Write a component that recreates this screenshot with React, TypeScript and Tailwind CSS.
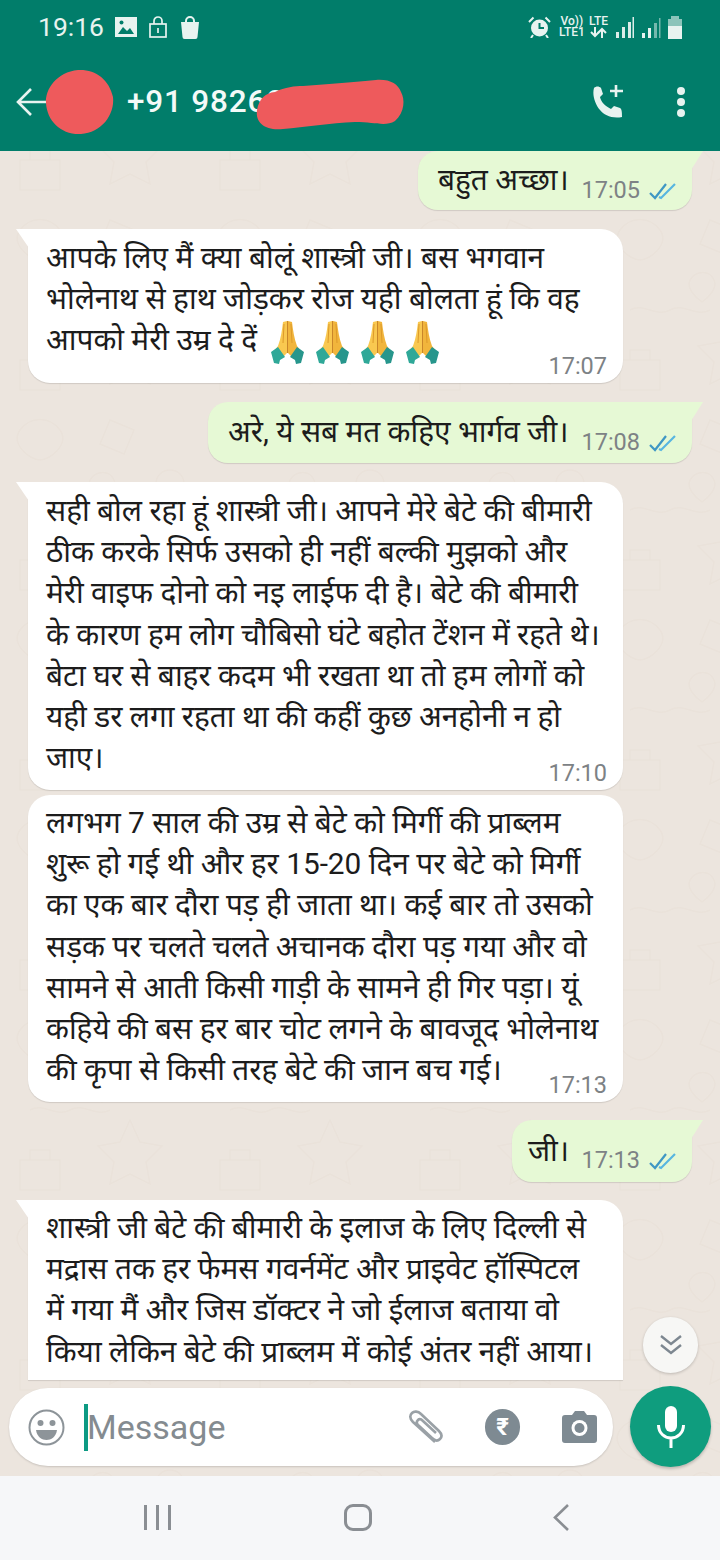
const font = "font-['Roboto','Noto_Sans','Noto_Sans_Devanagari','Liberation_Sans',sans-serif]";

const doodles = [
  "M20 30c10-14 30-14 40 0s-10 30-20 30-30-16-20-30z",
  "M110 20l24 10-10 24-24-10z",
  "M170 70c8 0 14 6 14 14s-6 14-14 14-14-6-14-14 6-14 14-14z",
  "M30 110c14-8 26 8 40 0s26 8 40 0",
  "M130 120l10 22 22 4-16 16 4 22-20-10-20 10 4-22-16-16 22-4z",
  "M20 160h40v30H20zM30 160v-10h20v10",
  "M90 80c6-10 20-10 24 0 4 8-6 18-12 22-6-4-16-14-12-22z",
];

function Ticks() {
  return (
    <svg width="28" height="20" viewBox="0 0 28 20" fill="none" strokeWidth="2.2" className="ml-[9px] shrink-0">
      <path d="M1 12 L6 17 L17 3" stroke="#3f97c4" />
      <path d="M10 16 L12 17 L26 3" stroke="#58b6e0" />
    </svg>
  );
}

function Pray() {
  return (
    <svg width="33" height="43" viewBox="0 0 33 43">
      <path d="M16 0 L12 1 C11 9 10 17 7 25 L3 30 L10 38 L16 32 Z" fill="#f9c850" />
      <path d="M17 0 L21 1 C22 9 23 17 26 25 L30 30 L23 38 L17 32 Z" fill="#f1b53c" />
      <path d="M13 3 L12 22 M20 3 L21 22" stroke="#dd9a2a" strokeWidth="1" fill="none" />
      <path d="M16.5 0 V32" stroke="#c9862a" strokeWidth="1" />
      <path d="M0 31 L7 26 L14 36 L9 39 L8 43 L3 42 Z" fill="#2fa898" />
      <path d="M33 31 L26 26 L19 36 L24 39 L25 43 L30 42 Z" fill="#27968c" />
    </svg>
  );
}

function Incoming({ lines, time, h, pt, tail, square, pray }: { lines: string[]; time?: string; h: string; pt: string; tail?: boolean; square?: boolean; pray?: boolean }) {
  return (
    <div className={`relative ml-7 w-[595px] bg-white pl-[18px] text-[29.8px] leading-[41.2px] text-[#1c1c1c] shadow-[0_1px_1px_rgba(0,0,0,0.12)] ${h} ${pt} ${square ? "rounded-tr-[22px]" : "rounded-[22px]"} ${tail ? "rounded-tl-none" : ""}`}>
      {tail && (
        <svg width="13" height="19" viewBox="0 0 13 19" className="absolute -left-3 top-0" fill="white">
          <path d="M0 0h13v19z" />
        </svg>
      )}
      {lines.map((line, i) => (
        <div key={i} className="flex h-[41.2px] items-center whitespace-nowrap">
          {line}
          {pray && i === lines.length - 1 && (
            <span className="ml-[14px] flex translate-y-[3px] gap-[12px]">
              <Pray />
              <Pray />
              <Pray />
              <Pray />
            </span>
          )}
        </div>
      ))}
      {time && <span className="absolute bottom-[2px] right-[16px] text-[23.5px] leading-[30px] text-[#7d8285]">{time}</span>}
    </div>
  );
}

function Outgoing({ text, time, w, h, pl }: { text: string; time: string; w: string; h: string; pl: string }) {
  return (
    <div className={`relative mr-7 flex items-center self-end rounded-[20px] rounded-tr-none bg-[#e6f9d5] pr-[15px] shadow-[0_1px_1px_rgba(0,0,0,0.12)] ${w} ${h} ${pl}`}>
      <svg width="12" height="19" viewBox="0 0 12 19" className="absolute -right-[11px] top-0" fill="#e6f9d5">
        <path d="M0 0h12L0 19z" />
      </svg>
      <span className="whitespace-nowrap text-[29.8px] text-[#1c1c1c]">{text}</span>
      <span className="ml-auto flex items-center pt-5 text-[23.5px] text-[#7d8285]">
        {time}
        <Ticks />
      </span>
    </div>
  );
}

export default function App() {
  return (
    <div className={`relative flex h-[1560px] w-[720px] flex-col overflow-hidden bg-[#ece5de] ${font}`}>
      {/* wallpaper doodles */}
      <svg width="720" height="1560" className="absolute left-0 top-0" fill="none" stroke="#eae2da" strokeWidth="1.5">
        <defs>
          <pattern id="doodle" width="200" height="200" patternUnits="userSpaceOnUse">
            {doodles.map((d, i) => (
              <path key={i} d={d} />
            ))}
          </pattern>
        </defs>
        <rect width="720" height="1560" fill="url(#doodle)" stroke="none" />
      </svg>

      {/* status + app bar */}
      <div className="relative h-[151px] shrink-0 bg-[#017d6a] text-[#e8f3f0]">
        <div className="flex h-[54px] items-center pl-[38px] pr-[36px]">
          <span className="text-[26.5px] leading-none">19:16</span>
          <svg width="22" height="20" viewBox="0 0 22 20" className="ml-[11px]" fill="#e8f3f0">
            <path d="M0 0h22v20H0z" />
            <path d="M3 17l5-7 4 4 3-3 4 6z" fill="#017d6a" />
            <circle cx="6.5" cy="5.5" r="2" fill="#017d6a" />
          </svg>
          <svg width="18" height="22" viewBox="0 0 18 22" className="ml-3" fill="none" stroke="#e8f3f0" strokeWidth="1.7">
            <rect x="1" y="8" width="16" height="13" />
            <path d="M5 8V5a4 4 0 0 1 8 0v3M9 12v5" />
          </svg>
          <svg width="20" height="23" viewBox="0 0 20 23" className="ml-[13px]" fill="#e8f3f0">
            <path d="M1 6h18l-1.5 15a2 2 0 0 1-2 2h-11a2 2 0 0 1-2-2z" />
            <path d="M6 7V5a4 4 0 0 1 8 0v2" fill="none" stroke="#e8f3f0" strokeWidth="2" />
          </svg>
          <div className="ml-auto flex items-center">
            <svg width="23" height="22" viewBox="0 0 23 22" fill="#e8f3f0">
              <circle cx="11.5" cy="12" r="8.5" />
              <path d="M11.5 7v5h4.5" fill="none" stroke="#017d6a" strokeWidth="2" />
              <path d="M1 6l4.5-4.5M22 6l-4.5-4.5M5 19l-2 3M18 19l2 3" fill="none" stroke="#e8f3f0" strokeWidth="2" />
            </svg>
            <div className="ml-2 flex flex-col items-center text-[12px] font-medium leading-[11px]">
              <span>Vo))</span>
              <span>LTE1</span>
            </div>
            <div className="ml-[4px] flex flex-col items-center text-[12px] font-medium leading-[11px]">
              <span>LTE</span>
              <svg width="17" height="11" viewBox="0 0 17 11" fill="none" stroke="#e8f3f0" strokeWidth="2">
                <path d="M5 0v9M1 5l4 4 4-4" />
                <path d="M12 11V2M8 6l4-4 4 4" />
              </svg>
            </div>
            <svg width="68" height="23" viewBox="0 0 68 23" className="ml-[8px]" fill="#e8f3f0">
              <path d="M0 16h3v6H0zM6 11h3v11H6zM12 6h3v16h-3zM16.5 1h1.5v21h-1.5z" opacity="0.95" />
              <path d="M26 17h3v5h-3zM32 12h3v10h-3z" />
              <path d="M38 7h3v15h-3zM43 2h1.5v20H43z" opacity="0.5" />
              <path d="M52 3h3V0h8v3h3v7H52z" opacity="0.6" />
              <path d="M52 10h14v13H52z" />
            </svg>
          </div>
        </div>
        <div className="relative flex h-[97px] items-center pb-[2px] pl-[16px] pr-[35px]">
          <svg width="30" height="30" viewBox="0 0 30 30" fill="none" stroke="#e8f3f0" strokeWidth="2.6">
            <path d="M30 15H2M15 2L2 15l13 13" />
          </svg>
          <span className="ml-[81px] text-[31.5px] font-medium tracking-[0.8px] text-[#f3faf8]">+91 98260</span>
          <svg width="34" height="33" viewBox="0 0 34 33" className="ml-auto mr-[52px]" fill="none" stroke="#e8f3f0">
            <path d="M3 3c2-2 5-2 7 0l2 6-3 3c1 5 5 9 11 12l3-3 6 2c2 1 2 5 2 9-10 2-18-2-22-7C4 19 1 10 3 3z" fill="#e8f3f0" stroke="none" />
            <path d="M25 0v12M19 6h13" strokeWidth="2.6" />
          </svg>
          <div className="flex flex-col gap-[3px]">
            <div className="h-2 w-2 rounded-full bg-[#e8f3f0]" />
            <div className="h-2 w-2 rounded-full bg-[#e8f3f0]" />
            <div className="h-2 w-2 rounded-full bg-[#e8f3f0]" />
          </div>
          {/* redaction marks */}
          <svg width="70" height="66" viewBox="0 0 70 66" className="absolute left-[45px] top-[15px]">
            <path d="M33 1C50 0 64 10 68 28C70 46 56 64 36 65C16 66 2 52 1 34C0 20 12 3 33 1Z" fill="#ee5a5c" />
          </svg>
          <svg width="150" height="52" viewBox="0 0 150 52" className="absolute left-[255px] top-[25px]">
            <path d="M2 31C4 20 10 14 20 13C30 8 40 7 48 7C75 5 100 3 121 1C135 0 143 5 146 13C150 20 150 33 140 42C130 48 120 43 100 43C75 44 50 48 28 50C12 52 0 45 2 31Z" fill="#ee5a5c" />
          </svg>
        </div>
      </div>

      {/* conversation */}
      <div className="relative flex flex-col">
        <Outgoing text="बहुत अच्छा।" time="17:05" w="w-[274px]" h="h-[59px]" pl="pl-5" />
        <div className="h-[19px]" />
        <Incoming
          h="h-[154px]"
          pt="pt-2"
          time="17:07"
          tail
          pray
          lines={["आपके लिए मैं क्या बोलूं शास्त्री जी। बस भगवान", "भोलेनाथ से हाथ जोड़कर रोज यही बोलता हूं कि वह", "आपको मेरी उम्र दे दें"]}
        />
        <div className="h-[19px]" />
        <Outgoing text="अरे, ये सब मत कहिए भार्गव जी।" time="17:08" w="w-[484px]" h="h-[61px]" pl="pl-5" />
        <div className="h-[19px]" />
        <Incoming
          h="h-[308px]"
          pt="pt-2"
          time="17:10"
          tail
          lines={[
            "सही बोल रहा हूं शास्त्री जी। आपने मेरे बेटे की बीमारी",
            "ठीक करके सिर्फ उसको ही नहीं बल्की मुझको और",
            "मेरी वाइफ दोनो को नइ लाईफ दी है। बेटे की बीमारी",
            "के कारण हम लोग चौबिसो घंटे बहोत टेंशन में रहते थे।",
            "बेटा घर से बाहर कदम भी रखता था तो हम लोगों को",
            "यही डर लगा रहता था की कहीं कुछ अनहोनी न हो",
            "जाए।",
          ]}
        />
        <div className="h-[5px]" />
        <Incoming
          h="h-[307px]"
          pt="pt-[7px]"
          time="17:13"
          lines={[
            "लगभग 7 साल की उम्र से बेटे को मिर्गी की प्राब्लम",
            "शुरू हो गई थी और हर 15-20 दिन पर बेटे को मिर्गी",
            "का एक बार दौरा पड़ ही जाता था। कई बार तो उसको",
            "सड़क पर चलते चलते अचानक दौरा पड़ गया और वो",
            "सामने से आती किसी गाड़ी के सामने ही गिर पड़ा। यूं",
            "कहिये की बस हर बार चोट लगने के बावजूद भोलेनाथ",
            "की कृपा से किसी तरह बेटे की जान बच गई।",
          ]}
        />
        <div className="h-[18px]" />
        <Outgoing text="जी।" time="17:13" w="w-[180px]" h="h-[62px]" pl="pl-4" />
        <div className="h-[18px]" />
        <Incoming
          h="h-[180px]"
          pt="pt-[7px]"
          tail
          square
          lines={[
            "शास्त्री जी बेटे की बीमारी के इलाज के लिए दिल्ली से",
            "मद्रास तक हर फेमस गवर्नमेंट और प्राइवेट हॉस्पिटल",
            "में गया मैं और जिस डॉक्टर ने जो ईलाज बताया वो",
            "किया लेकिन बेटे की प्राब्लम में कोई अंतर नहीं आया।",
          ]}
        />
      </div>

      {/* jump to latest */}
      <div className="absolute left-[643px] top-[1317px] flex h-[56px] w-[55px] items-center justify-center rounded-full bg-[#f7f7f5] shadow-[0_1px_3px_rgba(0,0,0,0.2)]">
        <svg width="24" height="22" viewBox="0 0 24 22" fill="none" stroke="#7d8790" strokeWidth="2.4">
          <path d="M2 2l10 8 10-8M2 11l10 8 10-8" />
        </svg>
      </div>

      {/* composer */}
      <div className="absolute left-[9px] top-[1388px] flex h-[78px] w-[604px] items-center rounded-[39px] bg-white pl-[19px] pr-[16px] shadow-[0_1px_2px_rgba(0,0,0,0.15)]">
        <svg width="37" height="37" viewBox="0 0 37 37" fill="none" stroke="#8d9499" strokeWidth="2">
          <circle cx="18.5" cy="18.5" r="17" />
          <circle cx="12.5" cy="14" r="3" fill="#8d9499" stroke="none" />
          <circle cx="24.5" cy="14" r="3" fill="#8d9499" stroke="none" />
          <path d="M8 21h21c-1 7-6 10-10.5 10S9 28 8 21z" fill="#8d9499" stroke="none" />
        </svg>
        <div className="ml-[19px] h-[47px] w-[4px] bg-[#0d9a83]" />
        <span className="-ml-px text-[34px] leading-none text-[#848b90]">Message</span>
        <svg width="36" height="34" viewBox="0 0 36 34" className="ml-auto" fill="none" stroke="#9aa1a6" strokeWidth="2.6">
          <path d="M27 32L5 12c-4-4-3-7-1-9s6-2 9 1l18 17c3 3 3 6 1 8s-5 2-8-1L10 15c-2-2-1-4 0-5s3-1 5 1l13 12" />
        </svg>
        <div className="ml-[41px] flex h-[36px] w-[35px] items-center justify-center rounded-full bg-[#7e8a92] text-[24px] font-bold text-white">₹</div>
        <svg width="35" height="32" viewBox="0 0 35 32" className="ml-[42px]" fill="#7e8a92">
          <path d="M3 4h7l3-4h9l3 4h7a3 3 0 0 1 3 3v22a3 3 0 0 1-3 3H3a3 3 0 0 1-3-3V7a3 3 0 0 1 3-3z" />
          <circle cx="17.5" cy="17" r="8" fill="white" />
          <circle cx="17.5" cy="17" r="5" fill="#7e8a92" />
        </svg>
      </div>
      <div className="absolute left-[630px] top-[1386px] flex h-[81px] w-[81px] items-center justify-center rounded-full bg-[#0f9d7e] shadow-[0_2px_3px_rgba(0,0,0,0.2)]">
        <svg width="28" height="42" viewBox="0 0 28 42" fill="none" stroke="white" strokeWidth="3">
          <rect x="8" y="0" width="12" height="26" rx="6" fill="white" stroke="none" />
          <path d="M1.5 19c0 8 6 13 12.5 13s12.5-5 12.5-13M14 32v10" />
        </svg>
      </div>

      {/* android nav */}
      <div className="absolute bottom-0 left-0 flex h-[84px] w-[720px] items-center bg-[#f6f7f9] pb-[2px]">
        <div className="ml-[144px] flex gap-[9px]">
          <div className="h-[25px] w-[3px] bg-[#8a8e93]" />
          <div className="h-[25px] w-[3px] bg-[#8a8e93]" />
          <div className="h-[25px] w-[3px] bg-[#8a8e93]" />
        </div>
        <div className="ml-[173px] h-[27px] w-[28px] rounded-[9px] border-[3px] border-[#8a8e93]" />
        <svg width="16" height="27" viewBox="0 0 16 27" className="ml-[181px]" fill="none" stroke="#8a8e93" strokeWidth="2.6">
          <path d="M15 1L2 13.5 15 26" />
        </svg>
      </div>
    </div>
  );
}
